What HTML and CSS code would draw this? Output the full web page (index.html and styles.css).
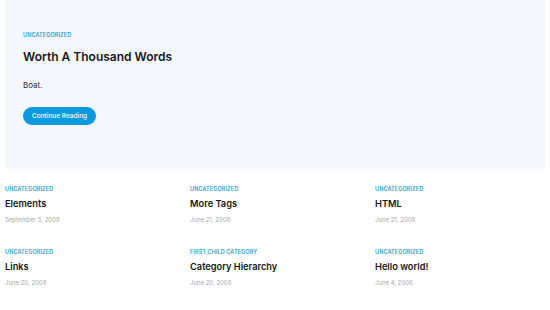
FILE: index.html
```html
<!DOCTYPE html>
<html lang="en">
<head>
  <meta charset="UTF-8">
  <meta name="viewport" content="width=device-width, initial-scale=1.0">
  <title>Blog</title>
  <link rel="stylesheet" href="styles.css">
</head>
<body>
  <div class="hero">
    <span class="cat">Uncategorized</span>
    <h1 class="hero-title">Worth A Thousand Words</h1>
    <p class="excerpt">Boat.</p>
    <a class="btn" href="#">Continue Reading</a>
  </div>

  <div class="posts">
    <div class="post">
      <span class="cat">Uncategorized</span>
      <h2 class="post-title">Elements</h2>
      <span class="date">September 5, 2008</span>
    </div>
    <div class="post">
      <span class="cat">Uncategorized</span>
      <h2 class="post-title">More Tags</h2>
      <span class="date">June 21, 2008</span>
    </div>
    <div class="post">
      <span class="cat">Uncategorized</span>
      <h2 class="post-title">HTML</h2>
      <span class="date">June 21, 2008</span>
    </div>
    <div class="post">
      <span class="cat">Uncategorized</span>
      <h2 class="post-title">Links</h2>
      <span class="date">June 20, 2008</span>
    </div>
    <div class="post">
      <span class="cat">First Child Category</span>
      <h2 class="post-title">Category Hierarchy</h2>
      <span class="date">June 20, 2008</span>
    </div>
    <div class="post">
      <span class="cat">Uncategorized</span>
      <h2 class="post-title">Hello world!</h2>
      <span class="date">June 4, 2008</span>
    </div>
  </div>
</body>
</html>
```

FILE: styles.css
```css
* {
  margin: 0;
  padding: 0;
  box-sizing: border-box;
}

body {
  font-family: Inter, "Liberation Sans", sans-serif;
  background: #fff;
  color: #1b1b1b;
}

.hero {
  position: relative;
  margin: 0 5px;
  padding: 31px 18px 43px;
  background: #f4f8fe;
  display: flex;
  flex-direction: column;
  align-items: flex-start;
}

/* wavy bottom edge */
.hero::after {
  content: "";
  position: absolute;
  left: 0;
  right: 0;
  bottom: -2px;
  height: 2px;
  background: radial-gradient(circle at 4px 0, #f4f8fe 2px, transparent 2.5px) 0 0 / 8px 2px repeat-x;
}

.cat {
  display: block;
  font-size: 5.5px;
  line-height: 8px;
  font-weight: 600;
  text-transform: uppercase;
  color: #2b9fd4;
  letter-spacing: 0.1px;
}

.hero-title {
  margin-top: 10px;
  font-size: 12px;
  line-height: 16px;
  font-weight: 600;
  color: #161616;
}

.excerpt {
  margin-top: 15px;
  font-size: 8px;
  line-height: 10px;
  color: #2a2a2a;
}

.btn {
  margin-top: 17px;
  display: inline-block;
  height: 18px;
  line-height: 18px;
  padding: 0 9px;
  border-radius: 9px;
  background: #0b9ae0;
  color: #fff;
  font-size: 6.5px;
  font-weight: 500;
  text-decoration: none;
}

.posts {
  margin: 17px 5px 0;
  display: grid;
  grid-template-columns: repeat(3, 185px);
  row-gap: 24px;
}

.post-title {
  margin-top: 5px;
  font-size: 9.25px;
  line-height: 12px;
  font-weight: 600;
  color: #161616;
}

.date {
  display: block;
  margin-top: 6px;
  font-size: 6px;
  line-height: 8px;
  color: #a8a8a8;
}
```
